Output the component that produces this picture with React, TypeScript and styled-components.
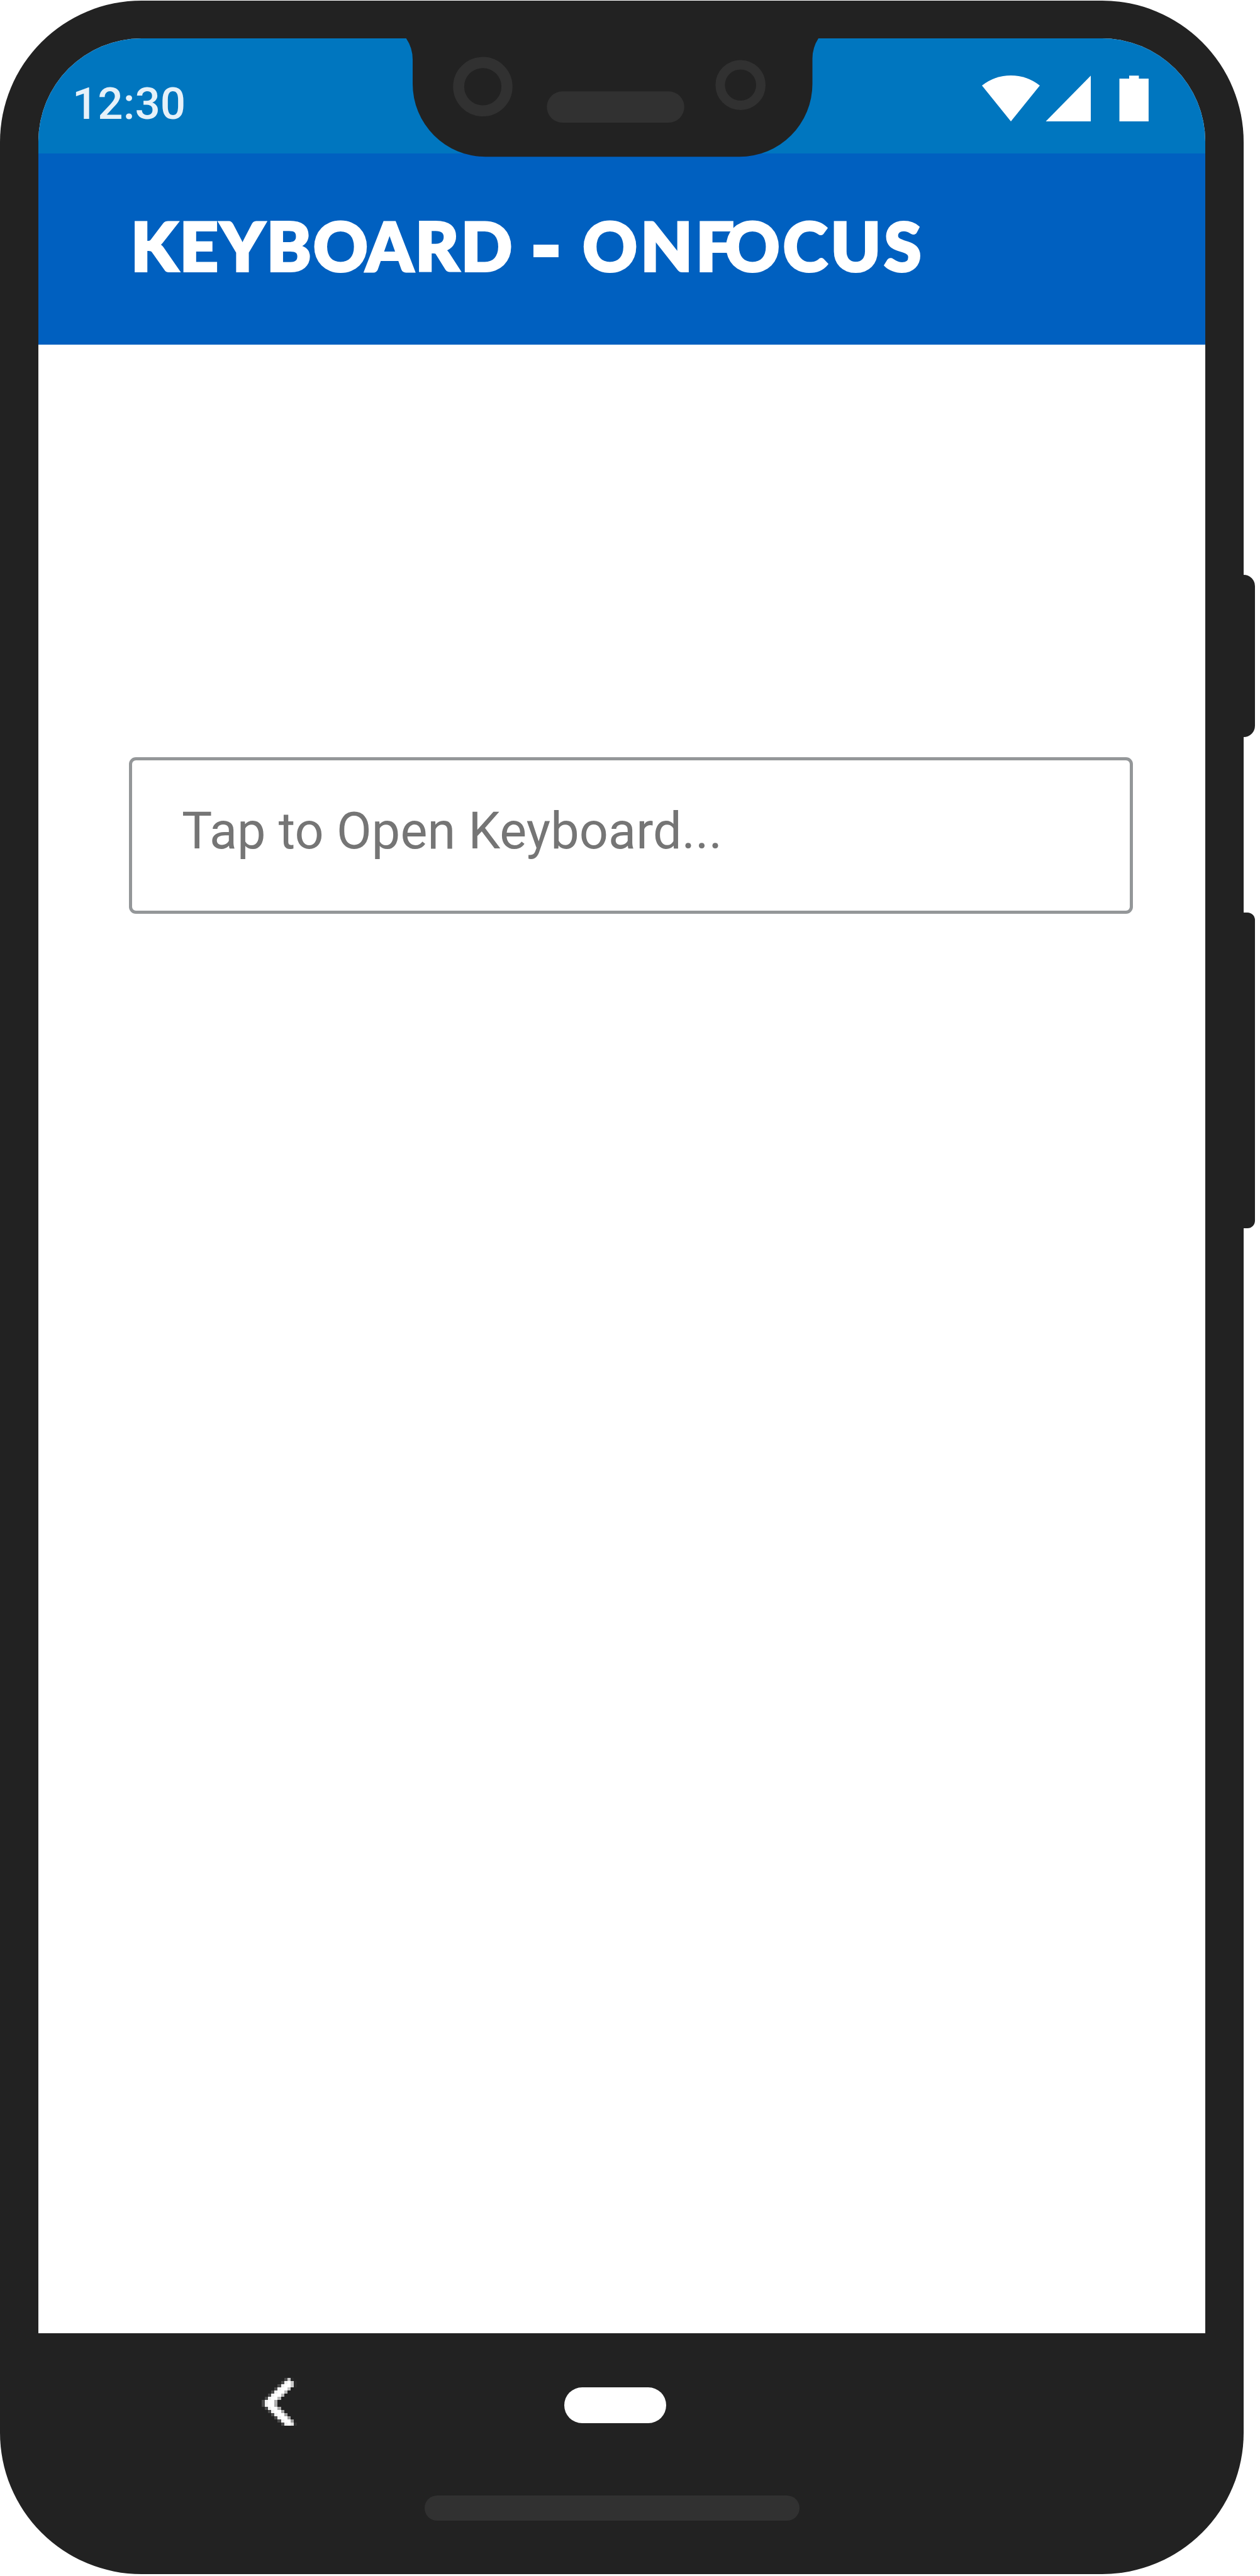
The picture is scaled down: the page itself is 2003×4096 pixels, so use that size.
import React from "react";
import styled, { createGlobalStyle } from "styled-components";

const GlobalStyle = createGlobalStyle`
  html, body { margin: 0; padding: 0; background: #fff; }
  * { box-sizing: border-box; }
`;

const Stage = styled.div`
  display: flex;
  width: 2003px;
  height: 4096px;
  padding-top: 1px;
  overflow: hidden;
  background: #fff;
`;

const Body = styled.div`
  position: relative;
  display: flex;
  flex-direction: column;
  flex: none;
  width: 1977px;
  height: 4092px;
  padding: 60px 61px 0;
  border-radius: 225px;
  background: #222;
`;

const SideButtons = styled.div`
  display: flex;
  flex-direction: column;
  gap: 279px;
  width: 18px;
  padding-top: 913px;
`;

const SideButton = styled.div<{ $length: number; $radius: number }>`
  height: ${(p) => p.$length}px;
  border-radius: 0 ${(p) => p.$radius}px ${(p) => p.$radius}px 0;
  background: #222;
`;

const Screen = styled.div`
  display: flex;
  flex-direction: column;
  height: 3649px;
  border-radius: 164px 164px 0 0;
  overflow: hidden;
  background: #fff;
`;

const StatusBar = styled.div`
  display: flex;
  align-items: center;
  justify-content: space-between;
  height: 183px;
  padding: 0 90px 0 54px;
  background: #0076bf;
`;

const Clock = styled.span`
  margin-top: 23px;
  font: 500 71px/1 Roboto, sans-serif;
  color: rgba(255, 255, 255, 0.9);
`;

const StatusIcons = styled.svg`
  display: block;
  width: 265px;
  height: 73px;
  margin-top: 8px;
  fill: #fff;
`;

const Header = styled.header`
  display: flex;
  align-items: center;
  height: 304px;
  padding: 0 0 13px 147px;
  background: #0060c0;
`;

const Title = styled.h1`
  margin: 0;
  font: 900 107px/1 Lato, sans-serif;
  white-space: nowrap;
  color: #fff;
  -webkit-text-stroke: 4px #fff;
`;

const Word = styled.span<{ $spacing: number }>`
  letter-spacing: ${(p) => p.$spacing}px;
`;

const Dash = styled.span`
  display: inline-block;
  margin: 0 13px 0 5px;
  transform: scaleX(1.1);
  -webkit-text-stroke: 8px #fff;
`;

const Content = styled.main`
  flex: 1;
  padding: 656px 115px 0 144px;
`;

const Field = styled.div`
  display: flex;
  height: 249px;
  padding: 64px 0 0 79px;
  border: 5px solid #949799;
  border-radius: 11px;
  font: 400 81px/1.2 Roboto, sans-serif;
  letter-spacing: 0.08px;
  color: #757575;
  white-space: nowrap;
`;

const NavBar = styled.nav`
  display: grid;
  grid-template-columns: 56px 162px;
  column-gap: 425px;
  align-items: start;
  padding: 71px 0 0 355px;
`;

const BackIcon = styled.svg`
  display: block;
  width: 56px;
  height: 76px;
`;

const HomePill = styled.div`
  width: 162px;
  height: 57px;
  margin-top: 15px;
  border-radius: 29px;
  background: #fff;
`;

const BottomSpeaker = styled.div`
  width: 596px;
  height: 40px;
  margin: 111px 0 0 614px;
  border-radius: 20px;
  background: #313131;
`;

const Notch = styled.svg`
  position: absolute;
  left: 600px;
  top: 60px;
  width: 750px;
  height: 190px;
`;

/* Grey level of each cell in the pixelated back arrow: [first column, levels…] */
const BACK_PIXELS: Array<[number, string[]]> = [
  [7, ["4a", "c8", "2a"]],
  [6, ["4a", "f1", "ff", "cc", "2a"]],
  [5, ["4a", "f1", "ff", "ff", "cc", "2a"]],
  [4, ["4a", "f4", "ff", "ff", "c4"]],
  [3, ["4a", "f1", "ff", "ff", "b8"]],
  [2, ["4a", "f1", "ff", "ff", "b8"]],
  [1, ["4a", "f1", "ff", "ff", "b8"]],
  [0, ["4a", "f1", "ff", "ff", "b0"]],
  [0, ["4a", "f1", "ff", "ff", "ac"]],
  [1, ["4a", "f1", "ff", "ff", "a8"]],
  [2, ["4a", "f1", "ff", "ff", "a8"]],
  [3, ["4a", "f1", "ff", "ff", "a0"]],
  [4, ["4a", "f1", "ff", "ff", "a0"]],
  [5, ["4a", "f1", "ff", "ff", "9c"]],
  [6, ["4a", "f1", "ff", "e2", "30"]],
];

export default function App() {
  return (
    <>
      <GlobalStyle />
      <Stage>
        <Body>
          <Screen>
            <StatusBar>
              <Clock>12:30</Clock>
              <StatusIcons viewBox="2139 166.8 363 98.2" preserveAspectRatio="none">
                <path d="M2139 188.3Q2167 166.8 2202 166.8T2265 188.3L2202 265Z" />
                <path d="M2278 265L2376 167V265Z" />
                <path d="M2438.3 173.6h21.2v-6.6h21.2v6.6h21.2V265h-63.6Z" />
              </StatusIcons>
            </StatusBar>
            <Header>
              <Title>
                <Word $spacing={3.2}>
                  KEYB<Word $spacing={-3}>O</Word>ARD
                </Word>{" "}
                <Dash>-</Dash>{" "}
                <Word $spacing={5.2}>
                  ON<Word $spacing={-14}>F</Word>OCUS
                </Word>
              </Title>
            </Header>
            <Content>
              <Field>Tap to Open Keyboard...</Field>
            </Content>
          </Screen>
          <NavBar>
            <BackIcon viewBox="0 0 11 15" preserveAspectRatio="none" shapeRendering="crispEdges">
              {BACK_PIXELS.map(([start, levels], row) =>
                levels.map((level, i) => (
                  <rect
                    key={`${row}-${i}`}
                    x={start + i}
                    y={row}
                    width={1}
                    height={1}
                    fill={`#${level}${level}${level}`}
                  />
                ))
              )}
            </BackIcon>
            <HomePill />
          </NavBar>
          <BottomSpeaker />
          <Notch viewBox="600 61 750 190">
            <path
              fill="#222"
              d="M636 55H1309V61H1301A60 60 0 0 0 1291.5 95V133A116 116 0 0 1 1175.5 249.3H772A116 116 0 0 1 656 133V95A60 60 0 0 0 645.7 61H636Z"
            />
            <circle cx="767.5" cy="137.8" r="38.4" fill="none" stroke="#313131" strokeWidth="17.6" />
            <circle cx="1177.2" cy="135.2" r="32.3" fill="none" stroke="#313131" strokeWidth="15" />
            <rect x="869.3" y="145.3" width="218.5" height="49.6" rx="24.8" fill="#313131" />
          </Notch>
        </Body>
        <SideButtons>
          <SideButton $length={258} $radius={18} />
          <SideButton $length={502} $radius={12} />
        </SideButtons>
      </Stage>
    </>
  );
}
